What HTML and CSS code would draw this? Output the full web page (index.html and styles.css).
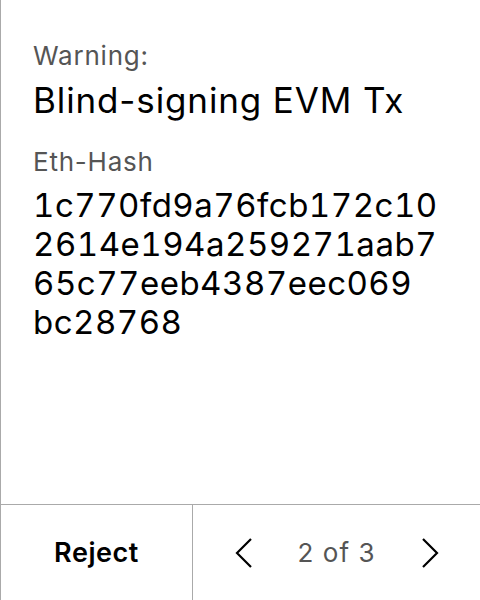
FILE: index.html
```html
<!DOCTYPE html>
<html>
<head>
<meta charset="utf-8">
<link rel="stylesheet" href="styles.css">
</head>
<body>
<div class="screen">
  <main class="content">
    <div class="label">Warning:</div>
    <div class="title">Blind-signing EVM Tx</div>
    <div class="label label-second">Eth-Hash</div>
    <div class="hash">1c770fd9a76fcb172c10<br>2614e194a259271aab7<br>65c77eeb4387eec069<br>bc28768</div>
  </main>
  <footer class="footer">
    <div class="reject">Reject</div>
    <div class="nav">
      <svg class="chev" width="20" height="32" viewBox="0 0 20 32"><path d="M17 2 L3 16 L17 30" fill="none" stroke="#000" stroke-width="2.2"/></svg>
      <span class="page">2 of 3</span>
      <svg class="chev" width="20" height="32" viewBox="0 0 20 32"><path d="M3 2 L17 16 L3 30" fill="none" stroke="#000" stroke-width="2.2"/></svg>
    </div>
  </footer>
</div>
</body>
</html>
```
FILE: styles.css
```css
* { box-sizing: border-box; }
html, body { margin: 0; padding: 0; background: #fff; }
body { font-family: Inter, "Noto Sans", sans-serif; color: #000; }
.screen {
  width: 480px;
  height: 600px;
  border-left: 1px solid #aaa;
  display: flex;
  flex-direction: column;
}
.content {
  flex: 1;
  padding: 40px 0 0 32px;
}
.label {
  font-size: 26px;
  line-height: 32px;
  letter-spacing: 0.03em;
  color: #555;
}
.label-second { margin-top: 24px; }
.title {
  font-size: 35px;
  line-height: 44px;
  letter-spacing: 0.025em;
  margin-top: 6px;
}
.hash {
  font-size: 33px;
  line-height: 39px;
  letter-spacing: 0.015em;
  font-feature-settings: "tnum" 1;
  margin-top: 8px;
}
.footer {
  height: 96px;
  border-top: 1px solid #aaa;
  display: grid;
  grid-template-columns: 192px 1fr;
}
.reject {
  border-right: 1px solid #aaa;
  display: flex;
  align-items: center;
  justify-content: center;
  font-size: 27px;
  font-weight: 600;
  letter-spacing: 0.02em;
}
.nav {
  display: flex;
  align-items: center;
  justify-content: center;
  gap: 44px;
}
.page {
  font-size: 26px;
  letter-spacing: 0.04em;
  color: #555;
}
.chev { display: block; }
```
